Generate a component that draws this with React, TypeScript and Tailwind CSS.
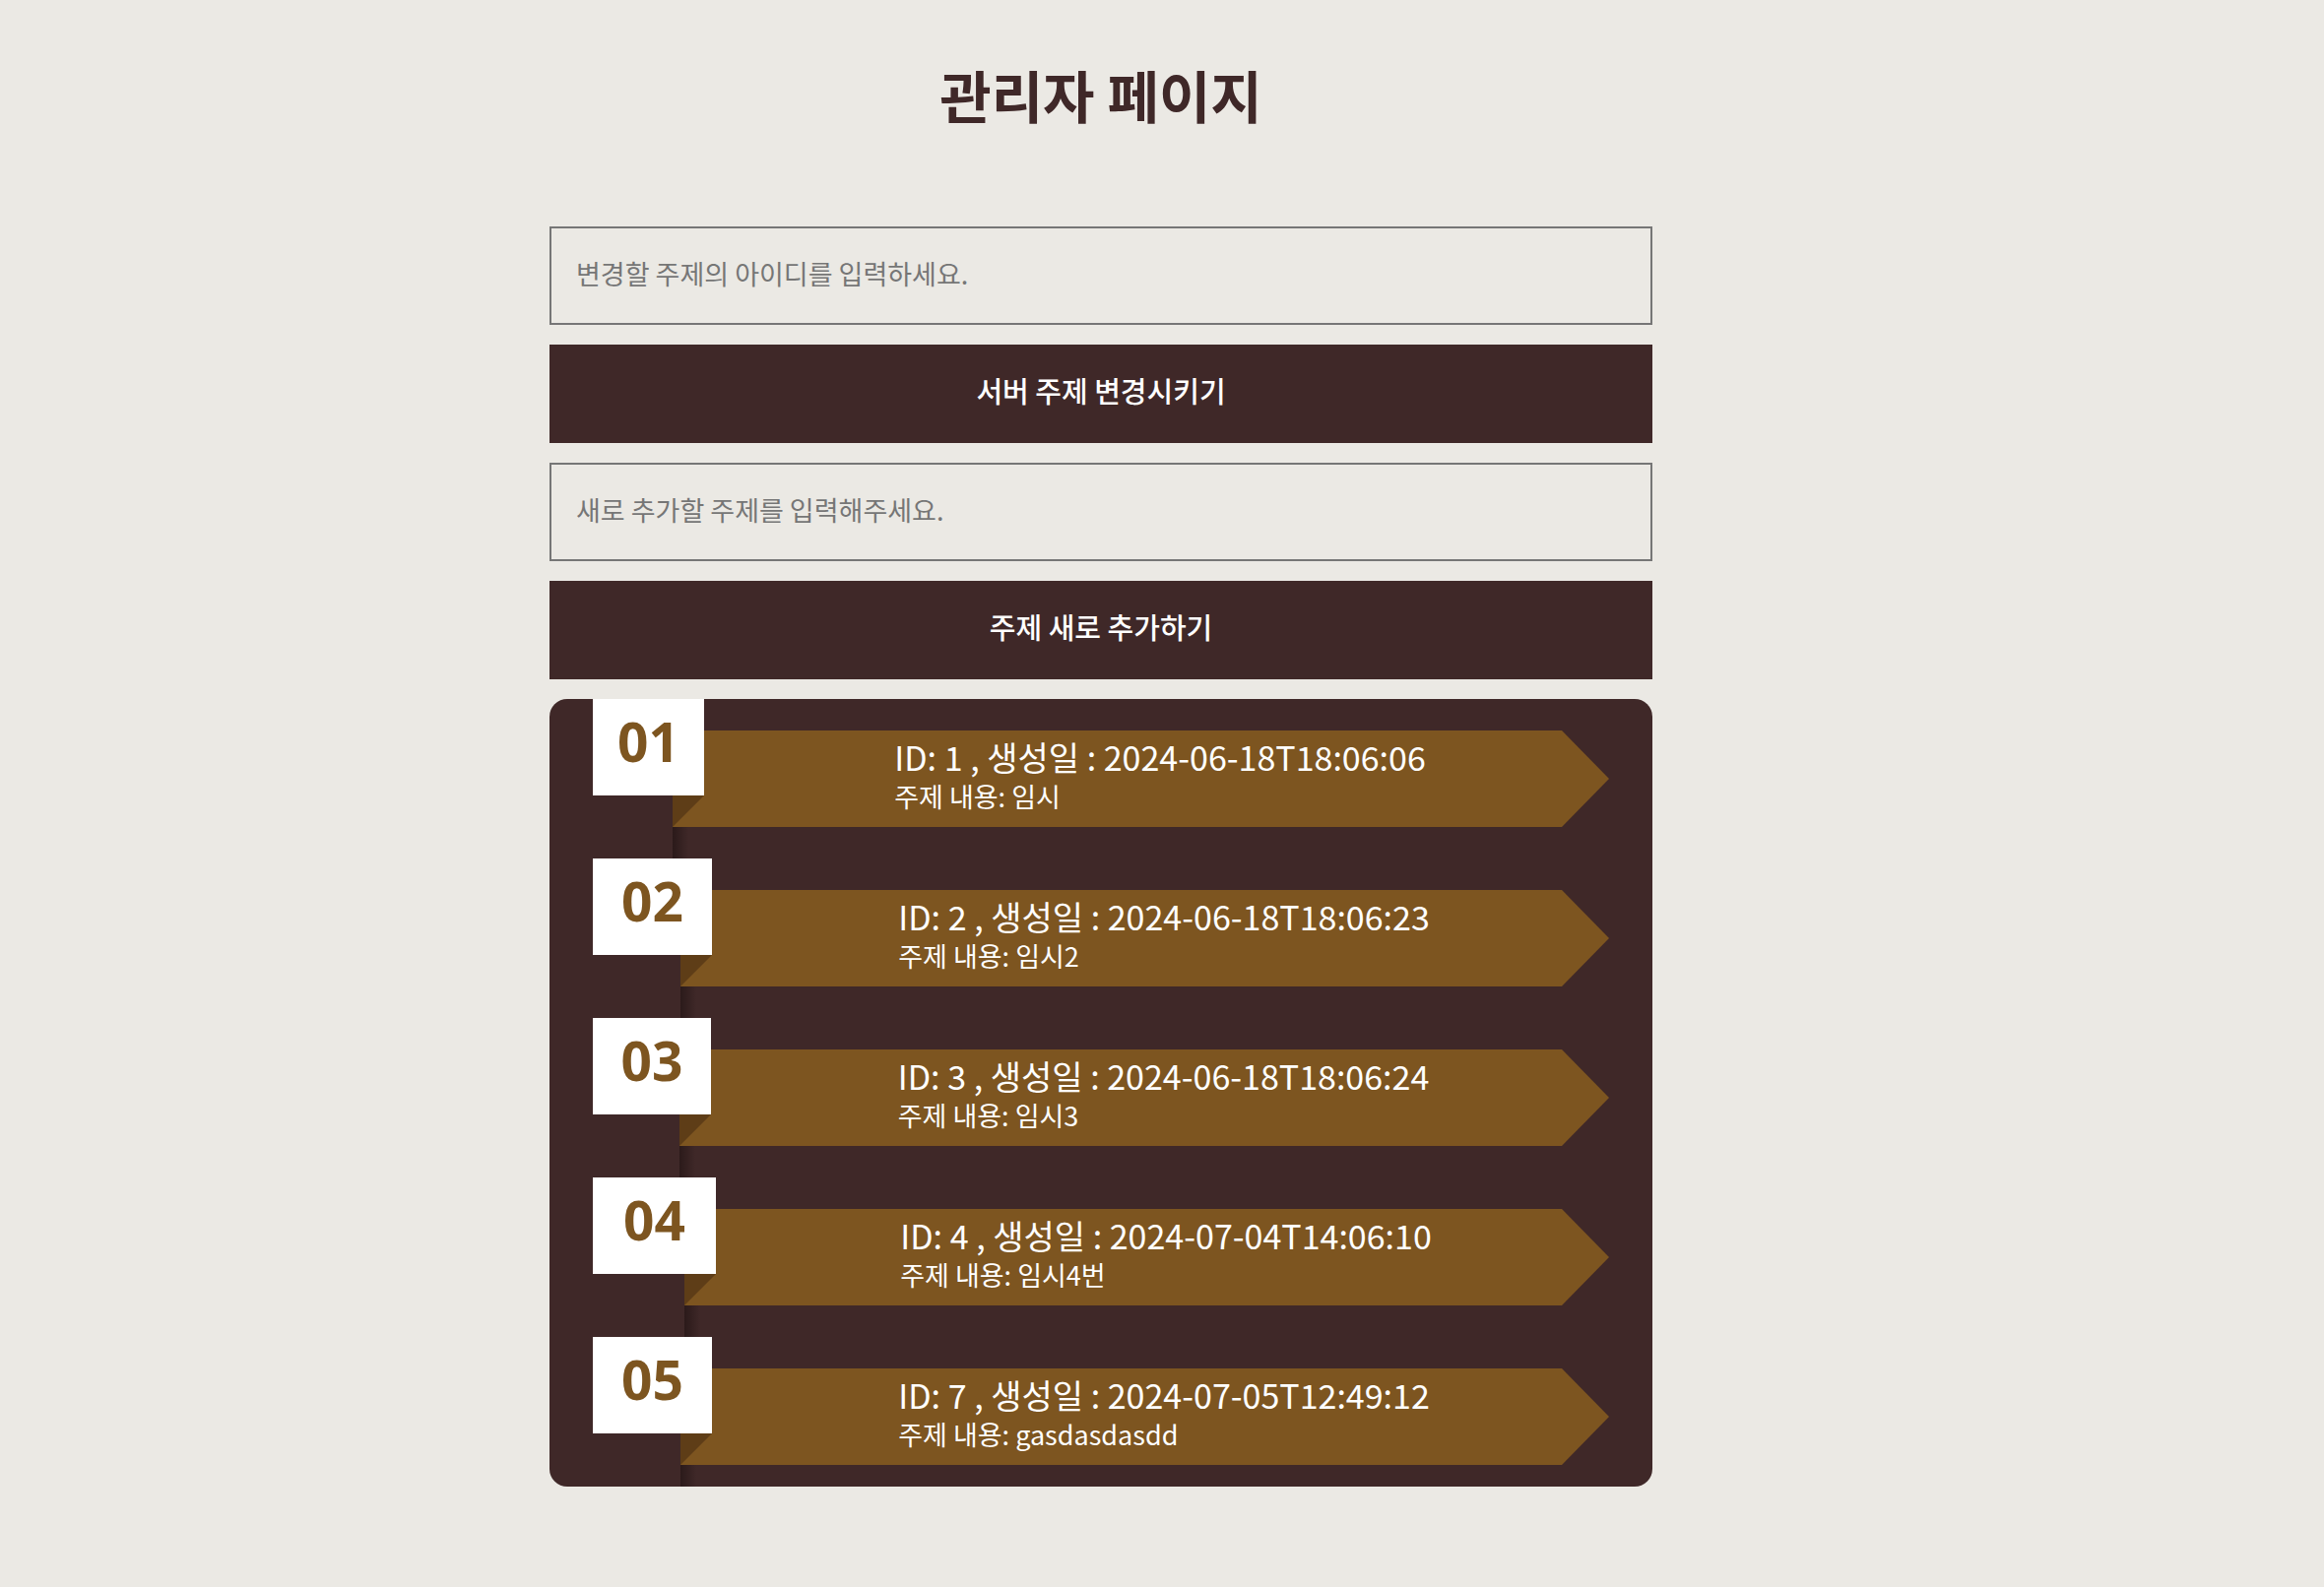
const topics = [
  { no: "01", width: "w-[113px]", id: 1, created: "2024-06-18T18:06:06", content: "임시" },
  { no: "02", width: "w-[121px]", id: 2, created: "2024-06-18T18:06:23", content: "임시2" },
  { no: "03", width: "w-[120px]", id: 3, created: "2024-06-18T18:06:24", content: "임시3" },
  { no: "04", width: "w-[125px]", id: 4, created: "2024-07-04T14:06:10", content: "임시4번" },
  { no: "05", width: "w-[121px]", id: 7, created: "2024-07-05T12:49:12", content: "gasdasdasdd" },
];

function TopicRow({ topic, last }: { topic: (typeof topics)[number]; last: boolean }) {
  return (
    <li className="flex items-start">
      <div className={`${topic.width} h-[98px] bg-white relative z-10 flex justify-center pt-[15px]`}>
        <span className="text-[55px] leading-none font-bold text-[#7d5520] font-['Noto_Sans',sans-serif]">{topic.no}</span>
      </div>
      <div className="flex-1 -ml-8 flex flex-col">
        <div className="mt-8 h-[98px] relative">
          <div className="h-full bg-[#7d5520] [clip-path:polygon(0_0,calc(100%-48px)_0,100%_50%,calc(100%-48px)_100%,0_100%)] flex items-center justify-center pl-[39px] pb-[10px]">
            <div className="text-white">
              <p className="text-[34px] leading-[46px]">
                ID: {topic.id} , 생성일 : {topic.created}
              </p>
              <p className="text-[27px] leading-[34px]">주제 내용: {topic.content}</p>
            </div>
          </div>
          <div className="absolute left-0 bottom-0 w-8 h-8 bg-[#5e3d17] [clip-path:polygon(0_0,100%_0,0_100%)]" />
        </div>
        <div className={`${last ? "h-[22px]" : "h-8"} w-[16px] bg-gradient-to-r from-[#2b1a1a] to-[#3f2828]`} />
      </div>
    </li>
  );
}

export default function App() {
  return (
    <div className="min-h-screen bg-[#ebe9e4] font-['Noto_Sans_CJK_KR',sans-serif] pl-[558px] pt-[59px] pb-[102px]">
      <div className="w-[1120px]">
        <h1 className="text-center text-[57px] leading-[72px] font-bold text-[#3f2828]">관리자 페이지</h1>
        <div className="mt-[99px] flex flex-col gap-5">
          <input
            className="h-[100px] w-full border-2 border-[#767676] bg-transparent px-[25px] pb-[6px] text-[27px] text-[#333] placeholder:text-[#767676] outline-none"
            placeholder="변경할 주제의 아이디를 입력하세요."
          />
          <button className="h-[100px] w-full bg-[#3f2828] text-white text-[29px] font-medium pb-[6px]">
            서버 주제 변경시키기
          </button>
          <input
            className="h-[100px] w-full border-2 border-[#767676] bg-transparent px-[25px] pb-[6px] text-[27px] text-[#333] placeholder:text-[#767676] outline-none"
            placeholder="새로 추가할 주제를 입력해주세요."
          />
          <button className="h-[100px] w-full bg-[#3f2828] text-white text-[29px] font-medium pb-[6px]">
            주제 새로 추가하기
          </button>
          <ul className="rounded-[18px] bg-[#3f2828] px-[44px]">
            {topics.map((t, i) => (
              <TopicRow key={t.no} topic={t} last={i === topics.length - 1} />
            ))}
          </ul>
        </div>
      </div>
    </div>
  );
}
